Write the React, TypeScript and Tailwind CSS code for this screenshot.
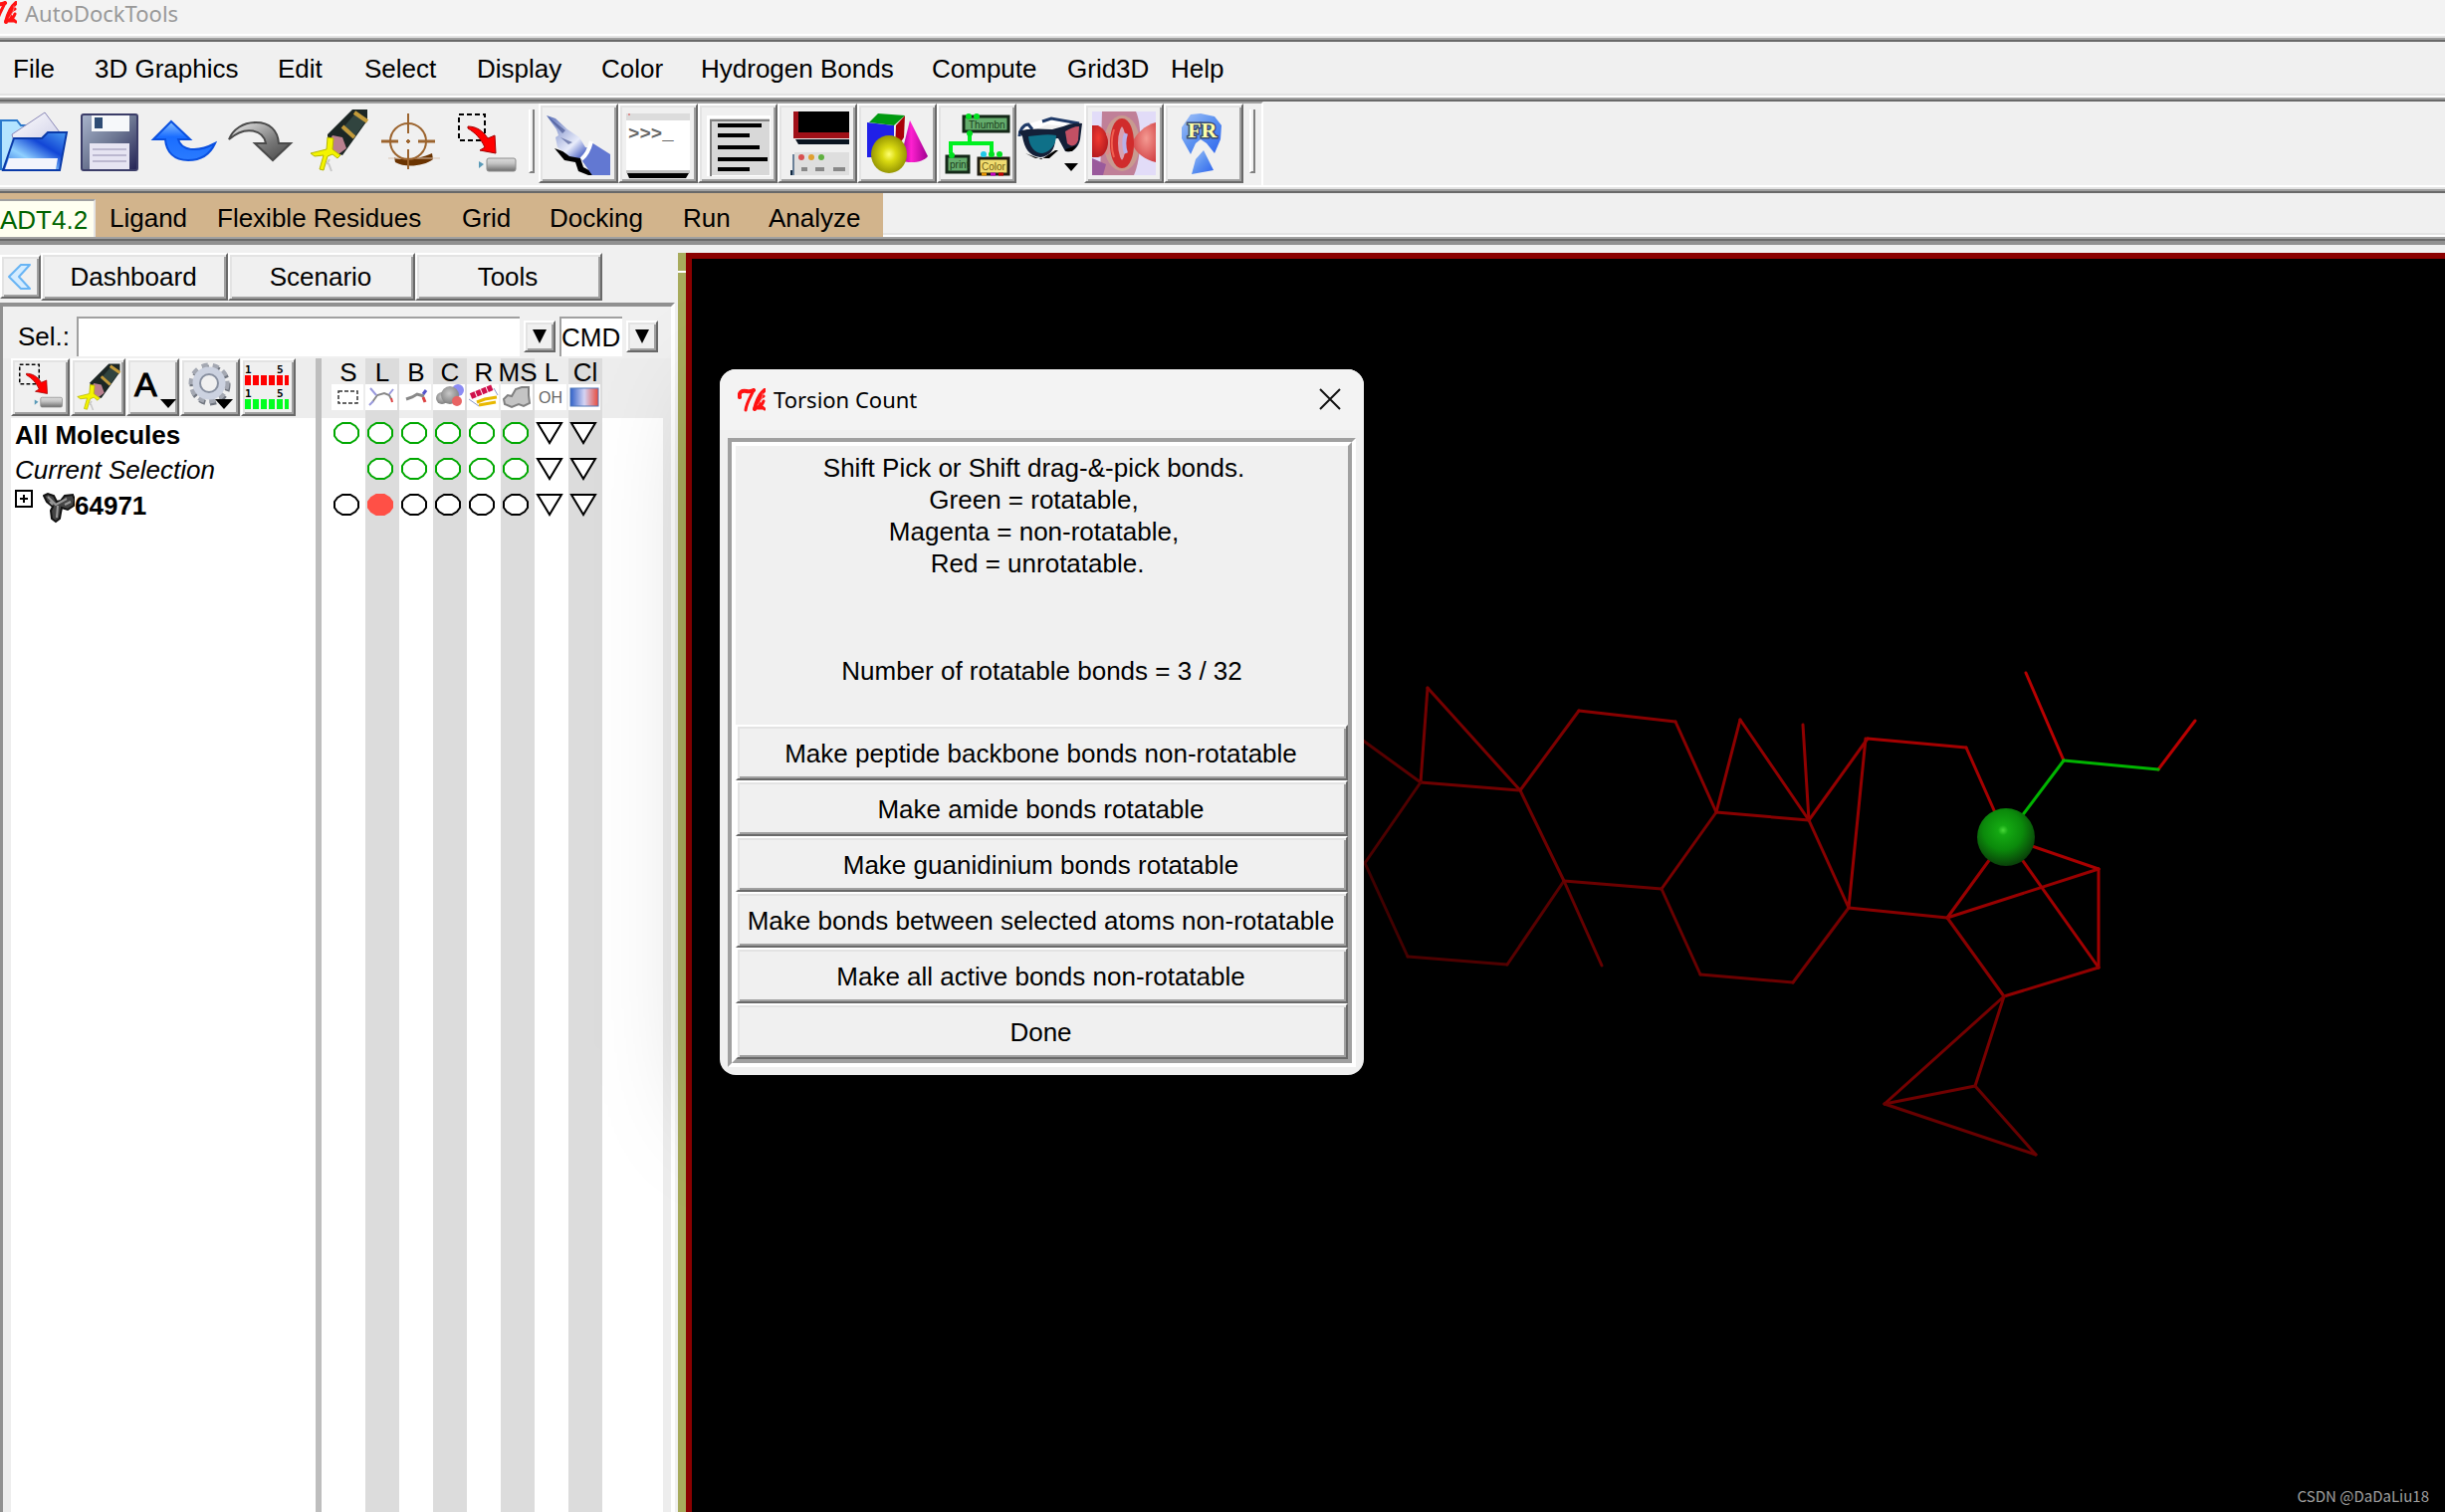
import React from "react";

const RAISED =
  "border-2 border-t-white border-l-white border-r-[#696969] border-b-[#696969] bg-[#f0f0f0] shadow-[inset_2px_2px_#e3e3e3,inset_-2px_-2px_#a0a0a0]";

function TkFeather() {
  return (
    <g fill="none" stroke="#ff1212" strokeLinecap="round" strokeLinejoin="round">
      <path d="M2 9C1 4 4 2 9 3 12 4 14 3 16 2" strokeWidth="4" />
      <path d="M16 2C13 9 9 14 8 22" strokeWidth="3" />
      <path d="M27 2C22 6 19 13 17 21" strokeWidth="4" />
      <path d="M26 8C23 9 21 12 20 15M26 13C25 16 23 18 20 19M20 12C22 16 24 19 27 21M17 20h7" strokeWidth="3" />
      <path d="M25 5C26 8 23 13 20 17" stroke="#ff7a7a" strokeWidth="1" />
    </g>
  );
}

function Defs() {
  return (
    <svg width="0" height="0" className="absolute" aria-hidden="true">
      <defs>
        <linearGradient id="folder" x1="0" y1="1" x2="1" y2="0">
          <stop offset="0" stopColor="#1d5fd8" />
          <stop offset="0.35" stopColor="#8fd0ff" />
          <stop offset="0.65" stopColor="#1246d6" />
          <stop offset="1" stopColor="#4a9bf0" />
        </linearGradient>
        <linearGradient id="paper" x1="0" y1="0" x2="1" y2="1">
          <stop offset="0" stopColor="#ffffff" />
          <stop offset="1" stopColor="#cdcde6" />
        </linearGradient>
        <linearGradient id="disk" x1="0" y1="0" x2="1" y2="1">
          <stop offset="0" stopColor="#a9b5cc" />
          <stop offset="0.5" stopColor="#6d7793" />
          <stop offset="1" stopColor="#232254" />
        </linearGradient>
        <linearGradient id="undo" x1="0" y1="0" x2="0" y2="1">
          <stop offset="0" stopColor="#8cc4ff" />
          <stop offset="0.4" stopColor="#1a6dff" />
          <stop offset="1" stopColor="#2a7bff" />
        </linearGradient>
        <linearGradient id="redo" x1="0" y1="0" x2="1" y2="1">
          <stop offset="0" stopColor="#f0f0f0" />
          <stop offset="0.6" stopColor="#777777" />
          <stop offset="1" stopColor="#444444" />
        </linearGradient>
        <linearGradient id="rubber" x1="0" y1="0" x2="0" y2="1">
          <stop offset="0" stopColor="#dddddd" />
          <stop offset="0.4" stopColor="#c4c4c4" />
          <stop offset="1" stopColor="#6c6c6c" />
        </linearGradient>
        <linearGradient id="hand" x1="0" y1="0" x2="1" y2="1">
          <stop offset="0" stopColor="#5a6fb8" />
          <stop offset="0.45" stopColor="#e8ecfa" />
          <stop offset="0.6" stopColor="#6478cc" />
          <stop offset="1" stopColor="#6278d2" />
        </linearGradient>
        <radialGradient id="yellow" cx="0.5" cy="0.5" r="0.55">
          <stop offset="0" stopColor="#ffff70" />
          <stop offset="0.35" stopColor="#dada10" />
          <stop offset="1" stopColor="#8c8c00" />
        </radialGradient>
        <linearGradient id="cone">
          <stop offset="0" stopColor="#8a0080" />
          <stop offset="0.4" stopColor="#ff20d0" />
          <stop offset="1" stopColor="#a00090" />
        </linearGradient>
        <radialGradient id="red" cx="0.4" cy="0.4" r="0.6">
          <stop offset="0" stopColor="#f03a30" />
          <stop offset="1" stopColor="#b81c20" />
        </radialGradient>
        <radialGradient id="pink" cx="0.6" cy="0.4" r="0.7">
          <stop offset="0" stopColor="#f49a92" />
          <stop offset="1" stopColor="#d03c40" />
        </radialGradient>
        <linearGradient id="fr" x1="0" y1="0" x2="1" y2="1">
          <stop offset="0" stopColor="#a4c4f8" />
          <stop offset="0.5" stopColor="#5a90f0" />
          <stop offset="1" stopColor="#2f64ee" />
        </linearGradient>
        <linearGradient id="heat">
          <stop offset="0" stopColor="#3060c8" />
          <stop offset="0.5" stopColor="#d4d4f4" />
          <stop offset="1" stopColor="#e84a3c" />
        </linearGradient>
        <radialGradient id="atom" cx="0.45" cy="0.38" r="0.62">
          <stop offset="0" stopColor="#48d838" />
          <stop offset="0.14" stopColor="#14a812" />
          <stop offset="0.55" stopColor="#0b8a0b" />
          <stop offset="1" stopColor="#093f09" />
        </radialGradient>
        <radialGradient id="blob" cx="0.45" cy="0.4" r="0.6">
          <stop offset="0" stopColor="#c8c8c8" />
          <stop offset="1" stopColor="#808080" />
        </radialGradient>
      </defs>
    </svg>
  );
}

/* Shared drawings, in the coordinates of the main toolbar. */
function Pencil() {
  return (
    <g>
      <path d="M354 6h15v11L344 52 329 47V31z" fill="#1c2624" />
      <path d="M357 10l10 8-12 17-12-9z" fill="#31443f" />
      <path d="M356 9l13 9M344 23l12 11" stroke="#c39a3a" strokeWidth="4" />
      <path d="M334 32l10 2 4 11-8 6-9-2-2-9z" fill="#b9808f" />
      <path d="M329 34l-1 12-16 4 4 3 9-1-4 14 4 1 4-14 5-2 5 4 3-3-8-6 1-11z" fill="#f4f400" stroke="#b5b500" strokeWidth="1" />
      <path d="M331 56l-3 5M330 60l3 8" stroke="#c8c8c8" strokeWidth="2" />
    </g>
  );
}

function SelectErase() {
  return (
    <g>
      <path d="M461 11h26v26h-26z" fill="none" stroke="#000" strokeWidth="2" strokeDasharray="5 3" />
      <path d="M470 23c8 0 15 4 20 12l7-3 1 18-16-3 5-3c-4-9-10-15-17-19z" fill="#ff0000" stroke="#a00000" strokeWidth="1" />
      <path d="M481 58l5 3-5 4z" fill="#5a9ab8" />
      <rect x="489" y="55" width="29" height="13" rx="2" fill="url(#rubber)" stroke="#8c8c8c" />
    </g>
  );
}

type Tool = { name: string; x: number; w: number; icon: React.ReactNode };

const FLAT: Tool[] = [
  {
    name: "Read Molecule", x: 0, w: 72, icon: (
      <g>
        <path d="M1 17h16l4 5h12v44H1z" fill="#b4e4ff" stroke="#2a78cc" strokeWidth="2" />
        <path d="M45 9l15 20-2 14H15l-3-12z" fill="url(#paper)" stroke="#8a88b8" strokeWidth="1" />
        <path d="M14 35h28l6-6h19l-7 38H3z" fill="url(#folder)" stroke="#0a3aa8" strokeWidth="2" />
        <path d="M9 55h49l-2 11H5z" fill="#f2f4fc" />
      </g>
    ),
  },
  {
    name: "Save", x: 72, w: 76, icon: (
      <g>
        <rect x="82" y="11" width="56" height="56" rx="2" fill="url(#disk)" stroke="#3b3d68" strokeWidth="2" />
        <rect x="92" y="12" width="38" height="16" fill="#f6f8fa" />
        <rect x="95" y="14" width="8" height="11" fill="#2e4c74" />
        <rect x="90" y="40" width="40" height="26" fill="#e6e4f2" />
        <path d="M93 46h34M93 52h34M93 58h34" stroke="#bcb8d0" strokeWidth="2" />
      </g>
    ),
  },
  {
    name: "Undo", x: 148, w: 76, icon: (
      <path d="M172 18l19 18h-12c3 11 18 14 37 4-5 11-14 17-27 17-14 0-22-8-23-21h-12z" fill="url(#undo)" stroke="#0a50e0" strokeWidth="2" />
    ),
  },
  {
    name: "Redo", x: 224, w: 76, icon: (
      <path d="M230 36c4-10 14-17 27-17 14 0 22 8 23 21h12l-18 17-18-17h11c-2-13-20-19-37-4z" fill="url(#redo)" stroke="#4a4a4a" strokeWidth="2" />
    ),
  },
  { name: "Highlight", x: 300, w: 76, icon: <Pencil /> },
  {
    name: "Center", x: 376, w: 76, icon: (
      <g fill="none">
        <path d="M396 54c6 4 26 2 38-4l1 6c-9 7-28 9-38 3z" fill="#6a3300" />
        <path d="M390 55h52" stroke="#d9c4b2" strokeWidth="1" />
        <circle cx="410" cy="38" r="18" stroke="#9c642e" strokeWidth="2" />
        <path d="M410 10v20M410 46v20M410 36v4M408 38h4" stroke="#9c642e" strokeWidth="2" />
        <path d="M383 38h17M420 38h17" stroke="#9c642e" strokeWidth="3" />
      </g>
    ),
  },
  { name: "Deselect", x: 452, w: 76, icon: <SelectErase /> },
];

const BOXED: Tool[] = [
  {
    name: "Pick", x: 541, w: 80, icon: (
      <g>
        <path d="M557 45l10 12 11 2 3 9 10 4h10l-15-8-4-12-14-3z" fill="#000" />
        <path d="M549 12l9 3 12 11 12 8 6 10 10 2 15 9v17h-18l-12-17-11-2-12-9-2-10 3-2-2-6z" fill="url(#hand)" />
        <path d="M594 39l19 12v21h-18l-10-15z" fill="#6278d2" />
        <path d="M594 38c-2 8-5 14-10 18" fill="none" stroke="#fff" strokeWidth="4" />
        <path d="M550 13l18 14-3 3zM563 34l12 5-4 2z" fill="#3a4a88" opacity="0.6" />
      </g>
    ),
  },
  {
    name: "Python Shell", x: 621, w: 80, icon: (
      <g>
        <rect x="629" y="10" width="64" height="60" fill="#fff" />
        <rect x="629" y="10" width="64" height="7" fill="#dcdcdc" />
        <circle cx="632" cy="11" r="1" fill="#d77" />
        <rect x="629" y="67" width="64" height="3" fill="#c0c0c0" />
        <path d="M630 70h62l-3 5h-57z" fill="#000" />
        <text x="631" y="36" fontSize="19" fontFamily="Liberation Mono" fontWeight="bold" fill="#666">&gt;&gt;&gt;_</text>
      </g>
    ),
  },
  {
    name: "Log", x: 701, w: 80, icon: (
      <g>
        <path d="M710 12h64v61h-64z" fill="#fff" />
        <path d="M713 15h60v57h-60z" fill="#d8d8d8" />
        <path d="M714 73V17h59" fill="none" stroke="#808080" strokeWidth="2" />
        <path d="M721 22h44M721 32h32M721 44h42M721 56h50M721 66h32" stroke="#000" strokeWidth="4" />
      </g>
    ),
  },
  {
    name: "Dashboard Window", x: 781, w: 80, icon: (
      <g>
        <path d="M797 8h56v27h-56z" fill="#a01018" />
        <path d="M802 8h51v21h-51z" fill="#000" />
        <path d="M799 36h54v5h-51z" fill="#0a1420" />
        <path d="M798 49h55v23h-55z" fill="#dedede" />
        <path d="M797 51v21" stroke="#6a8098" strokeWidth="2" />
        <circle cx="805" cy="54" r="3" fill="#d85050" />
        <circle cx="815" cy="54" r="3" fill="#e0a030" />
        <circle cx="825" cy="54" r="3" fill="#60b040" />
        <path d="M805 66h6M819 66h9M837 66h12" stroke="#888" strokeWidth="4" />
        <path d="M795 67v5" stroke="#102840" strokeWidth="2" />
      </g>
    ),
  },
  {
    name: "Geometry", x: 861, w: 80, icon: (
      <g>
        <path d="M900 22l9-10-1 22-9 14z" fill="#a80008" />
        <path d="M871 19l27 3v32h-27z" fill="#2020e8" />
        <path d="M873 19l9-9 27 2-11 10z" fill="#009a10" />
        <path d="M914 17l18 36c-4 6-18 8-28 4z" fill="url(#cone)" />
        <ellipse cx="893" cy="51" rx="18" ry="19" fill="url(#yellow)" />
      </g>
    ),
  },
  {
    name: "Vision", x: 941, w: 80, icon: (
      <g>
        <path d="M968 13h45v15h-45z" fill="#64ac6c" stroke="#142818" strokeWidth="3" />
        <text x="973" y="25" fontSize="10" fontFamily="Liberation Sans" fill="#1c401c">Thumbn</text>
        <path d="M974 30v10M955 50V40h41v11" fill="none" stroke="#00f020" strokeWidth="4" />
        <path d="M951 53h22v16h-22z" fill="#64ac6c" stroke="#142818" strokeWidth="3" />
        <text x="954" y="65" fontSize="10" fontFamily="Liberation Sans" fill="#1c401c">print</text>
        <path d="M983 55h30v16h-30z" fill="#f0dc70" stroke="#201c10" strokeWidth="3" />
        <text x="986" y="67" fontSize="10" fontFamily="Liberation Sans" fill="#705c10">Color</text>
        <g fill="#00e020">
          <circle cx="973" cy="13" r="3" />
          <circle cx="981" cy="13" r="3" />
          <circle cx="974" cy="30" r="3" />
          <circle cx="956" cy="52" r="3" />
          <circle cx="996" cy="51" r="3" />
          <circle cx="1004" cy="51" r="3" />
        </g>
        <circle cx="988" cy="51" r="3" fill="#20c8e8" />
        <path d="M986 71h5" stroke="#e09000" strokeWidth="3" />
        <path d="M995 71h5" stroke="#c000c0" strokeWidth="3" />
        <path d="M1003 71h5" stroke="#c00000" strokeWidth="3" />
      </g>
    ),
  },
];

const GLASSES = (
  <g>
    <path d="M1025 30l7-9 18-6 30 4-6 4-22-2-16 7z" fill="#fff" />
    <path d="M1024 33c0-6 4-12 9-12l4 5M1047 18l9-3 28 5" fill="none" stroke="#1f3a68" strokeWidth="3" />
    <path d="M1023 28c8-3 20-3 34-2l11-3c6-3 13-4 19-3l-2 16c-2 9-8 14-15 12l-7-13-3 0c0 12-6 18-15 19-11-1-16-9-18-21z" fill="#142038" />
    <path d="M1030 50l16 6 14-9 3 0-9 8h-14zM1070 46l12-4-5 6h-6z" fill="#000" />
    <path d="M1033 33c8-1 20-3 28-1 0 9-6 17-14 18-8 0-13-7-14-17z" fill="#0e7088" />
    <path d="M1070 28c5-3 9-5 14-5l-1 14c-2 6-7 7-11 3z" fill="#c25064" />
    <path d="M1069 60h14l-7 8z" fill="#000" />
  </g>
);

const BOXED_END: Tool[] = [
  {
    name: "Ambient Occlusion", x: 1089, w: 80, icon: (
      <g>
        <rect x="1097" y="8" width="64" height="64" fill="#e2dcf8" />
        <path d="M1107 8h34c6 12 6 46-2 64h-34z" fill="#c08098" />
        <path d="M1097 55l14 6-3 11h-11z" fill="#9a5a9c" />
        <ellipse cx="1127" cy="40" rx="18" ry="28" fill="#c89a90" />
        <path d="M1097 22h6c7 4 10 10 10 17s-4 14-10 15h-6z" fill="url(#red)" />
        <path d="M1161 19v40c-10-2-20-9-24-19 4-10 13-18 24-21z" fill="url(#pink)" />
        <path d="M1112 30c4 6 4 14 0 21" fill="none" stroke="#d88" strokeWidth="3" />
        <ellipse cx="1127" cy="40" rx="8" ry="21" fill="#d8a0b0" stroke="#d02c2c" strokeWidth="8" />
        <path d="M1119 26c-3 8-3 20 0 28" fill="none" stroke="#f06050" strokeWidth="2" />
        <path d="M1131 30c-2 6-2 14 0 20" fill="none" stroke="#b8b0e8" strokeWidth="4" />
      </g>
    ),
  },
  {
    name: "Flexible Receptor", x: 1169, w: 80, icon: (
      <g>
        <path d="M1196 11l10-1 14 3 7 9-1 14-6 14-8-10-6-4-5 4-5 11-9-16v-11z" fill="url(#fr)" />
        <path d="M1209 47l10 20-22 4 4-15z" fill="url(#fr)" />
        <text x="1193" y="34" fontSize="22" fontFamily="Liberation Serif" fontWeight="bold" fill="#ffffa8" stroke="#3a4c70" strokeWidth="3" paintOrder="stroke">FR</text>
      </g>
    ),
  },
];

function Boxed({ t }: { t: Tool }) {
  return (
    <button type="button" aria-label={t.name} className={`h-20 w-20 shrink-0 ${RAISED}`}>
      <svg className="h-[76px] w-[76px]" viewBox={`${t.x + 2} 2 76 76`}>{t.icon}</svg>
    </button>
  );
}

const MENUS: [string, string][] = [
  ["File", "w-[82px]"], ["3D Graphics", "w-[184px]"], ["Edit", "w-[87px]"], ["Select", "w-[113px]"],
  ["Display", "w-[125px]"], ["Color", "w-[100px]"], ["Hydrogen Bonds", "w-[232px]"],
  ["Compute", "w-[136px]"], ["Grid3D", "w-[104px]"], ["Help", "w-[84px]"],
];

const TABS: [string, string][] = [
  ["Ligand", "w-[108px]"], ["Flexible Residues", "w-[246px]"], ["Grid", "w-[88px]"],
  ["Docking", "w-[134px]"], ["Run", "w-[86px]"], ["Analyze", "w-[115px]"],
];

const COLUMNS: { label: string; icon: React.ReactNode; cells: string[] }[] = [
  {
    label: "S", cells: ["green", "", "black"],
    icon: <path d="M7 7h19v12H7z" fill="none" stroke="#333" strokeWidth="1.5" strokeDasharray="4 2" />,
  },
  {
    label: "L", cells: ["green", "green", "red"],
    icon: <g fill="none" strokeWidth="2"><path d="M7 18l5-7 7-2 5 2 2 4" stroke="#888" /><path d="M5 4l6 7M4 21l4-4M24 10l4-5" stroke="#99d" /><path d="M26 14l1 4" stroke="#d44" /></g>,
  },
  {
    label: "B", cells: ["green", "green", "black"],
    icon: <g fill="none" strokeWidth="3"><path d="M7 15l6-2 5-3 7 2" stroke="#888" /><path d="M24 10l3-4" stroke="#55c" /><path d="M24 13l2 5" stroke="#d44" /></g>,
  },
  {
    label: "C", cells: ["green", "green", "black"],
    icon: <g><circle cx="25" cy="6" r="6" fill="#8c8cf4" /><circle cx="9" cy="14" r="6" fill="url(#blob)" /><circle cx="17" cy="11" r="9" fill="url(#blob)" /><circle cx="24" cy="17" r="5" fill="#e86464" /></g>,
  },
  {
    label: "R", cells: ["green", "green", "black"],
    icon: <g fill="none"><path d="M4 12L26 3" stroke="#d0104c" strokeWidth="6" strokeDasharray="5 1" /><path d="M10 18l8-3 12-2M12 21l17-3" stroke="#e8b800" strokeWidth="3" /><path d="M2 15l10 7M27 4l4 7" stroke="#8898c8" /></g>,
  },
  {
    label: "MS", cells: ["green", "green", "black"],
    icon: <path d="M3 15l4-4 4 1 4-7 6-2 7 0 0 8 1 8-6 3-5-2-7 3-7-3z" fill="#c4c4c4" stroke="#808080" strokeWidth="2" />,
  },
  {
    label: "L", cells: ["tri", "tri", "tri"],
    icon: <text x="4" y="19" fontSize="16" fontFamily="Liberation Sans" fill="#666">OH</text>,
  },
  {
    label: "Cl", cells: ["tri", "tri", "tri"],
    icon: <rect x="2" y="4" width="28" height="18" fill="url(#heat)" stroke="#5078b8" strokeWidth="1" />,
  },
];

function Mark({ kind }: { kind: string }) {
  if (kind === "tri") return <path d="M3 5h24L15 25z" fill="#fff" stroke="#000" strokeWidth="2" />;
  const stroke = kind === "green" ? "#00a800" : kind === "red" ? "#ff5046" : "#000";
  return (
    <path
      d="M11 5h8l5 3 3 4v6l-3 4-5 3h-8l-5-3-3-4v-6l3-4z"
      fill={kind === "red" ? "#ff5046" : "#fff"}
      stroke={stroke}
      strokeWidth="2"
    />
  );
}

const SMALL: { name: string; w: string; box: string; icon: React.ReactNode }[] = [
  {
    name: "Deselect All", w: "w-[59px]", box: "0 0 55 54",
    icon: <svg x="3" y="2" width="48" height="48" viewBox="456 8 64 64"><SelectErase /></svg>,
  },
  {
    name: "Highlight All", w: "w-[55px]", box: "0 0 51 54",
    icon: <svg x="1" y="2" width="48" height="48" viewBox="307 4 64 64"><Pencil /></svg>,
  },
  {
    name: "Labels", w: "w-[53px]", box: "0 0 49 54",
    icon: <g><text x="6" y="36" fontSize="34" fontFamily="Liberation Sans" stroke="#000" strokeWidth="1">A</text><path d="M32 39h16l-8 9z" /></g>,
  },
  {
    name: "Settings", w: "w-[60px]", box: "0 0 56 54",
    icon: (
      <g>
        <circle cx="28" cy="25" r="18" fill="none" stroke="#70757f" strokeWidth="5" strokeDasharray="6 5" />
        <circle cx="27" cy="23" r="18" fill="none" stroke="#a4a8b2" strokeWidth="5" strokeDasharray="6 5" />
        <circle cx="27" cy="23" r="13" fill="#f0f0f0" stroke="#ccd2e0" strokeWidth="7" />
        <circle cx="27" cy="23" r="9" fill="none" stroke="#8890a0" strokeWidth="2" />
        <path d="M33 39h18l-9 10z" />
      </g>
    ),
  },
  {
    name: "Sequence", w: "w-[55px]", box: "0 0 51 54",
    icon: (
      <g fontFamily="DejaVu Sans Mono" fontWeight="bold" fontSize="11">
        <text x="2" y="13">1</text><text x="34" y="13">5</text>
        <text x="2" y="37">1</text><text x="34" y="37">5</text>
        <path d="M2 20h44" stroke="#ff0000" strokeWidth="10" strokeDasharray="6 2" />
        <path d="M2 44h44" stroke="#00ff20" strokeWidth="10" strokeDasharray="6 2" />
      </g>
    ),
  },
];

function DropButton({ label }: { label: string }) {
  return (
    <button type="button" aria-label={label} className={`flex h-8 w-8 items-center justify-center ${RAISED}`}>
      <svg className="h-4 w-4" viewBox="0 0 16 16"><path d="M1 1h14L8 15z" /></svg>
    </button>
  );
}

const BONDS: [number, number, number, number, string][] = [
  [1350, 730, 1427, 786, "#600000"],
  [1427, 786, 1434, 691, "#780000"],
  [1434, 691, 1527, 794, "#780000"],
  [1427, 786, 1527, 794, "#720000"],
  [1427, 786, 1371, 867, "#560000"],
  [1371, 867, 1414, 961, "#480000"],
  [1414, 961, 1514, 969, "#500000"],
  [1514, 969, 1571, 885, "#580000"],
  [1571, 885, 1527, 794, "#6c0000"],
  [1571, 885, 1609, 970, "#640000"],
  [1527, 794, 1586, 714, "#7c0000"],
  [1586, 714, 1683, 725, "#880000"],
  [1683, 725, 1724, 816, "#880000"],
  [1571, 885, 1669, 893, "#6c0000"],
  [1669, 893, 1724, 816, "#780000"],
  [1724, 816, 1748, 723, "#8c0000"],
  [1748, 723, 1817, 824, "#900000"],
  [1724, 816, 1817, 824, "#880000"],
  [1811, 728, 1817, 824, "#900000"],
  [1817, 824, 1876, 742, "#940000"],
  [1876, 742, 1975, 751, "#a40000"],
  [1975, 751, 2015, 841, "#a40000"],
  [1874, 742, 1857, 912, "#940000"],
  [1817, 824, 1857, 912, "#880000"],
  [1669, 893, 1708, 979, "#680000"],
  [1708, 979, 1801, 987, "#6c0000"],
  [1801, 987, 1857, 912, "#740000"],
  [1857, 912, 1956, 922, "#880000"],
  [1956, 922, 2015, 841, "#980000"],
  [1956, 922, 2108, 873, "#980000"],
  [2015, 841, 2108, 873, "#a80000"],
  [2015, 841, 2108, 972, "#a00000"],
  [2108, 873, 2108, 972, "#a00000"],
  [1956, 922, 2013, 1001, "#880000"],
  [2013, 1001, 2108, 972, "#900000"],
  [2013, 1001, 1893, 1109, "#740000"],
  [2013, 1001, 1984, 1091, "#780000"],
  [1984, 1091, 1893, 1109, "#700000"],
  [1893, 1109, 2045, 1160, "#680000"],
  [1984, 1091, 2045, 1160, "#680000"],
  [2035, 676, 2073, 764, "#b80000"],
  [2168, 773, 2205, 724, "#b80000"],
  [2073, 764, 2168, 773, "#00b400"],
  [2073, 764, 2015, 841, "#00b400"],
];

const ACTIONS = [
  "Make peptide backbone bonds non-rotatable",
  "Make amide bonds rotatable",
  "Make guanidinium bonds rotatable",
  "Make bonds between selected atoms non-rotatable",
  "Make all active bonds non-rotatable",
  "Done",
];

function TorsionDialog() {
  return (
    <section
      role="dialog"
      aria-labelledby="torsion-title"
      className="absolute top-[111px] left-7 w-[647px] rounded-2xl bg-[#f0f0f0] pb-2 shadow-[0_32px_120px_rgba(0,0,0,0.25)]"
    >
      <header className="flex h-[61px] items-center rounded-t-2xl bg-[#f3f3f3] pr-[22px] pl-[18px]">
        <svg className="h-6 w-7" viewBox="0 0 28 24" aria-hidden="true"><TkFeather /></svg>
        <h2 id="torsion-title" className="ml-2 flex-1 font-['Noto_Sans'] text-[22px]">Torsion Count</h2>
        <button type="button" aria-label="Close" className="h-6 w-6">
          <svg className="h-6 w-6" viewBox="0 0 24 24"><path d="M2 1L22 21M22 1L2 21" stroke="#111" strokeWidth="2" /></svg>
        </button>
      </header>
      <div className="mx-2 mt-2 border-4 border-t-[#a0a0a0] border-r-white border-b-white border-l-[#a0a0a0]">
        <div className="border-4 border-t-white border-r-[#a0a0a0] border-b-[#a0a0a0] border-l-white">
          <p className="h-[200px] pt-[6px] pr-4 text-center leading-8 whitespace-pre">
            {"Shift Pick or Shift drag-&-pick bonds.\nGreen = rotatable,\nMagenta = non-rotatable,\n Red = unrotatable."}
          </p>
          <p className="h-20 pt-[10px] text-center leading-8">Number of rotatable bonds = 3 / 32</p>
          {ACTIONS.map((a) => (
            <button key={a} type="button" className={`block h-14 w-full pt-[2px] pr-[2px] whitespace-nowrap ${RAISED}`}>{a}</button>
          ))}
        </div>
      </div>
    </section>
  );
}

function Ruler({ light }: { light: "top" | "bottom" }) {
  return (
    <div className="shrink-0">
      <div className={light === "top" ? "h-[2px] bg-white" : "h-[2px] bg-[#e3e3e3]"} />
      <div className={light === "top" ? "h-[2px] bg-[#e3e3e3]" : "h-[2px] bg-white"} />
      <div className="h-[2px] bg-[#a0a0a0]" />
      <div className="h-[2px] bg-[#696969]" />
    </div>
  );
}

function Grip() {
  return (
    <div className="mt-[6px] h-16 w-[6px] border-r-2 border-b-2 border-l-2 border-r-[#808080] border-b-[#808080] border-l-white" />
  );
}

export default function App() {
  return (
    <main className="flex h-screen flex-col overflow-hidden bg-[#f0f0f0] font-['Liberation_Sans',Arial,sans-serif] text-[26px] text-black">
      <Defs />
      <header className="flex h-[34px] shrink-0 items-start bg-[#f3f3f3]">
        <svg className="mt-[1px] h-6 w-[17px]" viewBox="11 0 17 24" aria-hidden="true"><TkFeather /></svg>
        <h1 className="ml-2 font-['Noto_Sans'] text-[22px] leading-[26px] text-[#999]">AutoDockTools</h1>
      </header>
      <Ruler light="top" />

      <nav className="flex h-[52px] shrink-0 pl-[13px]">
        {MENUS.map(([label, w]) => (
          <button key={label} type="button" className={`${w} shrink-0 pt-[2px] text-left whitespace-nowrap`}>{label}</button>
        ))}
      </nav>
      <Ruler light="bottom" />

      <div className="flex h-[84px] shrink-0">
        <div className="flex border-t-2 border-r-2 border-t-[#a0a0a0] border-r-white pr-[6px]">
          {FLAT.map((t) => (
            <button key={t.name} type="button" aria-label={t.name} className="h-20 shrink-0">
              <svg width={t.w} height="80" viewBox={`${t.x} 0 ${t.w} 80`}>{t.icon}</svg>
            </button>
          ))}
          <div className="w-[13px] shrink-0 pl-[3px]"><Grip /></div>
          {BOXED.map((t) => <Boxed key={t.name} t={t} />)}
          <button type="button" aria-label="Stereo" className="h-20 w-[68px] shrink-0">
            <svg className="h-20 w-[68px]" viewBox="1021 0 68 80">{GLASSES}</svg>
          </button>
          {BOXED_END.map((t) => <Boxed key={t.name} t={t} />)}
          <div className="shrink-0 pl-[6px]"><Grip /></div>
        </div>
      </div>
      <Ruler light="top" />

      <div className="flex h-11 shrink-0">
        <nav className="flex bg-[#d2b48c]">
          <button type="button" className="mt-[6px] w-24 overflow-hidden border-t-2 border-r-2 border-t-[#a0a0a0] border-r-[#e3e3e3] bg-[#fffff0] pr-3 text-right whitespace-nowrap text-[#006400]">
            ADT4.2
          </button>
          <div className="flex pl-[14px]">
            {TABS.map(([label, w]) => (
              <button key={label} type="button" className={`${w} pt-[6px] text-left whitespace-nowrap`}>{label}</button>
            ))}
          </div>
        </nav>
        <div className="flex-1 border-b-2 border-white"><div className="h-full border-b-2 border-[#e3e3e3]" /></div>
      </div>
      <div className="h-[2px] shrink-0 bg-[#a0a0a0]" />
      <div className="h-[2px] shrink-0 bg-[#696969]" />
      <div className="h-1 shrink-0 bg-[#909090]" />

      <div className="flex min-h-0 flex-1 pt-2">
        <aside className="flex w-[681px] shrink-0 flex-col pr-[3px]">
          <div className="flex h-[50px] shrink-0">
            <button type="button" aria-label="Collapse" className={`mt-[2px] h-11 w-[41px] ${RAISED}`}>
              <svg className="h-10 w-[37px]" viewBox="0 0 37 40">
                <path d="M19 8h9L17 20l11 12h-9L7 20z" fill="#d4ecff" stroke="#68b4f4" strokeWidth="2" strokeLinejoin="round" />
              </svg>
            </button>
            {["Dashboard", "Scenario", "Tools"].map((t) => (
              <button key={t} type="button" className={`h-12 w-[188px] pr-[2px] ${RAISED}`}>{t}</button>
            ))}
          </div>
          <div className="flex min-h-0 flex-1 flex-col border-t-4 border-r-4 border-l-[3px] border-t-[#909090] border-r-white border-l-[#909090] pt-[10px]">
            <div className="flex h-[42px] shrink-0 pl-[15px]">
              <label htmlFor="sel" className="w-[59px] shrink-0 leading-10">Sel.:</label>
              <input id="sel" className="h-10 w-[445px] border-t-2 border-l-2 border-[#a0a0a0] bg-white outline-none" />
              <div className="mt-1 ml-1"><DropButton label="Selection history" /></div>
              <input aria-label="Command level" defaultValue="CMD" className="ml-1 h-10 w-[63px] border-t-2 border-l-2 border-[#a0a0a0] bg-white outline-none" />
              <div className="mt-1 ml-1"><DropButton label="Command options" /></div>
            </div>
            <div className="flex min-h-0 flex-1 bg-[#ededed] pr-2">
              <div className="flex w-[314px] shrink-0 flex-col">
                <div className="flex h-[60px] shrink-0 gap-[1px] pl-2">
                  {SMALL.map((s) => (
                    <button key={s.name} type="button" aria-label={s.name} className={`h-[58px] shrink-0 ${s.w} ${RAISED}`}>
                      <svg className="h-full w-full" viewBox={s.box}>{s.icon}</svg>
                    </button>
                  ))}
                </div>
                <ul className="ml-2 flex-1 bg-white pl-1 leading-9 whitespace-nowrap">
                  <li className="leading-[34px] font-bold">All Molecules</li>
                  <li className="italic">Current Selection</li>
                  <li className="flex font-bold">
                    <button type="button" aria-label="Expand 64971" className="h-9 w-7">
                      <svg className="h-9 w-7" viewBox="0 0 28 36">
                        <path d="M1 3h16v16H1zM9 7v8M5 11h8" fill="none" stroke="#000" strokeWidth="2" />
                      </svg>
                    </button>
                    <svg className="h-9 w-8 shrink-0" viewBox="0 0 32 36" aria-hidden="true">
                      <path d="M1 8l4-2 6 2 3 6 4-1 4-5 8-1 2 5-1 6-6 4-6-2-1 5-1 6-4 3-4-3-1-8 2-4-6-5z" fill="#444" stroke="#111" strokeWidth="2" />
                      <path d="M5 9l8 8 11-6M15 18l-1 12M22 17l6-3M7 14l3 3" stroke="#999" strokeWidth="2" fill="none" />
                    </svg>
                    <span>64971</span>
                  </li>
                </ul>
              </div>
              <div className="w-[6px] shrink-0 bg-[#bebebe]" />
              <div className="flex min-w-0 flex-1 bg-[linear-gradient(#ededed_60px,#ffffff_60px)] pl-[10px]">
                {COLUMNS.map((c, i) => (
                  <div key={i} className={`flex w-[34px] shrink-0 flex-col ${i % 2 ? "bg-[#dcdcdc]" : ""}`}>
                    <div className="flex h-[26px] justify-center leading-7 whitespace-nowrap">{c.label}</div>
                    <svg className="mb-2 h-[26px] w-8 bg-white" viewBox="0 0 32 26" aria-hidden="true">{c.icon}</svg>
                    {c.cells.map((kind, r) =>
                      kind ? (
                        <button key={r} type="button" aria-label={`${c.label} row ${r + 1}`} className="h-9">
                          <svg className="h-9 w-[34px]" viewBox="0 0 34 36"><Mark kind={kind} /></svg>
                        </button>
                      ) : (
                        <div key={r} className="h-9" />
                      ),
                    )}
                  </div>
                ))}
              </div>
            </div>
          </div>
        </aside>
        <div className="w-2 shrink-0 bg-[#a8ab5c] pt-[18px]"><div className="h-[2px] bg-white" /></div>
        <div className="relative min-w-0 flex-1 border-t-[6px] border-l-[6px] border-[#8b0000] bg-black">
          <svg className="h-full w-full" viewBox="695 260 1761 1259" preserveAspectRatio="xMinYMin slice" role="img" aria-label="Molecule">
            <g strokeWidth="3" strokeLinecap="round">
              {BONDS.map(([x1, y1, x2, y2, c], i) => <line key={i} x1={x1} y1={y1} x2={x2} y2={y2} stroke={c} />)}
            </g>
            <circle cx="2015" cy="841" r="29" fill="url(#atom)" />
          </svg>
          <TorsionDialog />
          <p className="absolute right-4 bottom-[6px] font-['Noto_Sans_CJK_SC',sans-serif] text-[15px] leading-5 text-[#a0a0a0]">CSDN @DaDaLiu18</p>
        </div>
      </div>
    </main>
  );
}
